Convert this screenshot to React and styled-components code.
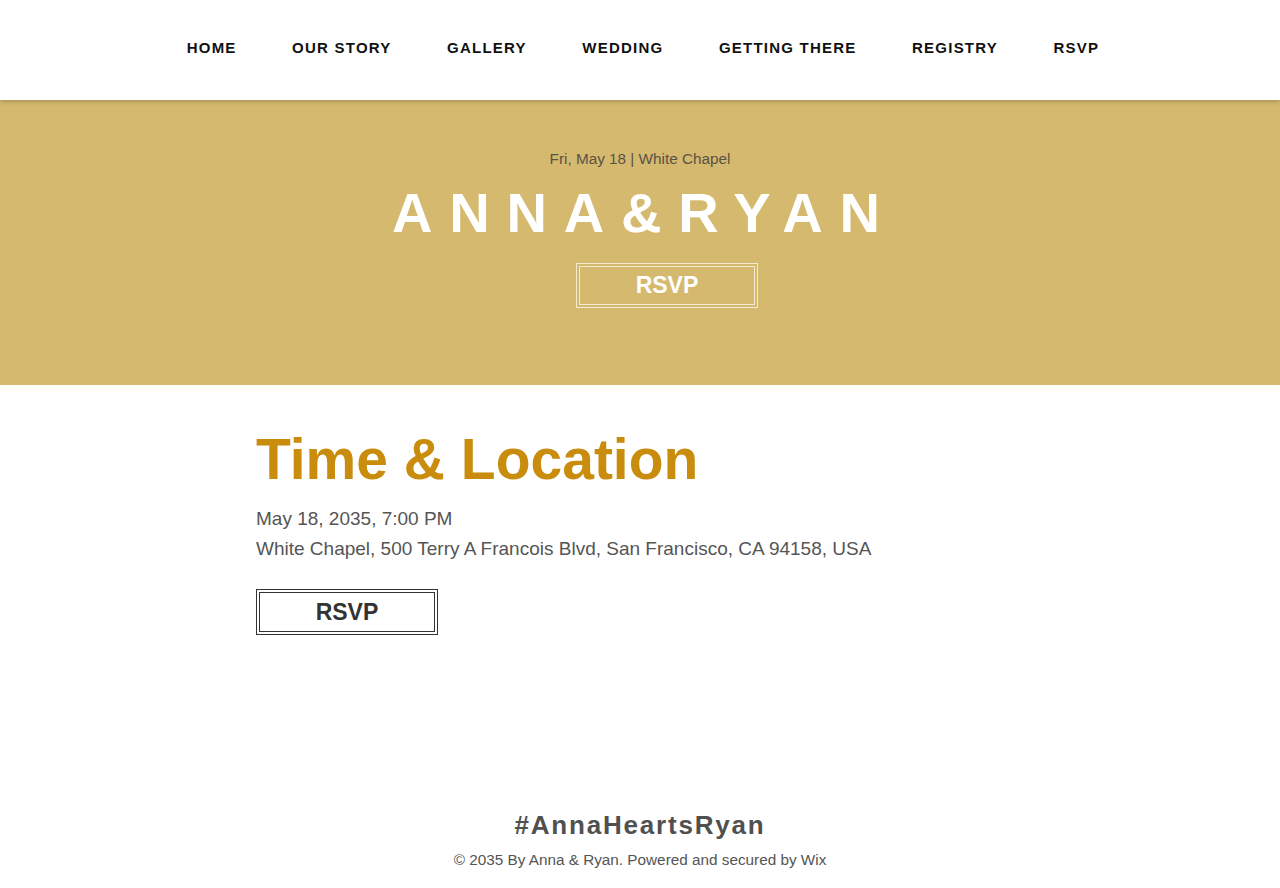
import React from "react";
import styled, { createGlobalStyle } from "styled-components";

const Global = createGlobalStyle`
  html, body { margin: 0; padding: 0; background: #fff; }
  body { font-family: "Liberation Sans", Arial, sans-serif; }
  * { box-sizing: border-box; }
`;

const Page = styled.div`
  min-height: 100vh;
  display: flex;
  flex-direction: column;
`;

const Header = styled.header`
  position: relative;
  z-index: 2;
  height: 100px;
  background: #fff;
  box-shadow: 0 1px 5px rgba(0, 0, 0, 0.28);
  display: flex;
  justify-content: center;
  padding: 38px 0 0 6px;
`;

const Nav = styled.nav`
  display: flex;
  gap: 55.5px;
  height: 20px;
`;

const NavLink = styled.a`
  font-size: 15px;
  line-height: 20px;
  font-weight: 700;
  letter-spacing: 1.23px;
  color: #111;
  text-decoration: none;
  white-space: nowrap;
`;

const Hero = styled.section`
  height: 285px;
  background: #d5b96e;
  display: flex;
  flex-direction: column;
  align-items: center;
  padding-top: 49px;
`;

const Sub = styled.div`
  font-size: 15.3px;
  line-height: 20px;
  color: #5a5244;
`;

const Couple = styled.h1`
  margin: 16px 0 0;
  font-size: 56px;
  line-height: 56px;
  font-weight: 700;
  letter-spacing: 16.8px;
  padding-left: 8.8px;
  color: #fff;
`;

const Button = styled.a`
  display: flex;
  align-items: center;
  justify-content: center;
  width: 182px;
  height: ${(p) => p.$h}px;
  border: 1px solid ${(p) => p.$line};
  box-shadow: inset 0 0 0 2px ${(p) => p.$bg}, inset 0 0 0 3px ${(p) => p.$line};
  background: ${(p) => p.$bg};
  color: ${(p) => p.$fg};
  font-size: 23px;
  font-weight: 700;
  text-decoration: none;
`;

const HeroButton = styled(Button)`
  margin: 22px 0 0 54px;
`;

const Main = styled.main`
  flex: 1;
  width: 768px;
  margin: 0 auto;
  padding-top: 46px;
`;

const Title = styled.h2`
  margin: 0;
  font-size: 57px;
  line-height: 57px;
  font-weight: 700;
  color: #c98c0c;
`;

const Details = styled.div`
  margin-top: 16px;
  font-size: 19px;
  line-height: 30px;
  color: #555;
`;

const ContentButton = styled(Button)`
  margin-top: 25px;
`;

const Footer = styled.footer`
  display: flex;
  flex-direction: column;
  align-items: center;
  padding-bottom: 18px;
`;

const Hashtag = styled.div`
  font-size: 26px;
  line-height: 31px;
  font-weight: 700;
  letter-spacing: 1.8px;
  padding-left: 0;
  color: #505050;
`;

const Copy = styled.div`
  margin-top: 9px;
  font-size: 15.3px;
  line-height: 20px;
  color: #555;
`;

const links = ["HOME", "OUR STORY", "GALLERY", "WEDDING", "GETTING THERE", "REGISTRY", "RSVP"];

export default function App() {
  return (
    <Page>
      <Global />
      <Header>
        <Nav>
          {links.map((l) => (
            <NavLink key={l} href="#">{l}</NavLink>
          ))}
        </Nav>
      </Header>
      <Hero>
        <Sub>Fri, May 18 | White Chapel</Sub>
        <Couple>ANNA&amp;RYAN</Couple>
        <HeroButton href="#" $h={45} $bg="#d5b96e" $line="rgba(255,255,255,0.7)" $fg="#fff">
          RSVP
        </HeroButton>
      </Hero>
      <Main>
        <Title>Time &amp; Location</Title>
        <Details>
          <div>May 18, 2035, 7:00 PM</div>
          <div>White Chapel, 500 Terry A Francois Blvd, San Francisco, CA 94158, USA</div>
        </Details>
        <ContentButton href="#" $h={46} $bg="#fff" $line="#333" $fg="#333">
          RSVP
        </ContentButton>
      </Main>
      <Footer>
        <Hashtag>#AnnaHeartsRyan</Hashtag>
        <Copy>© 2035 By Anna &amp; Ryan. Powered and secured by Wix</Copy>
      </Footer>
    </Page>
  );
}
